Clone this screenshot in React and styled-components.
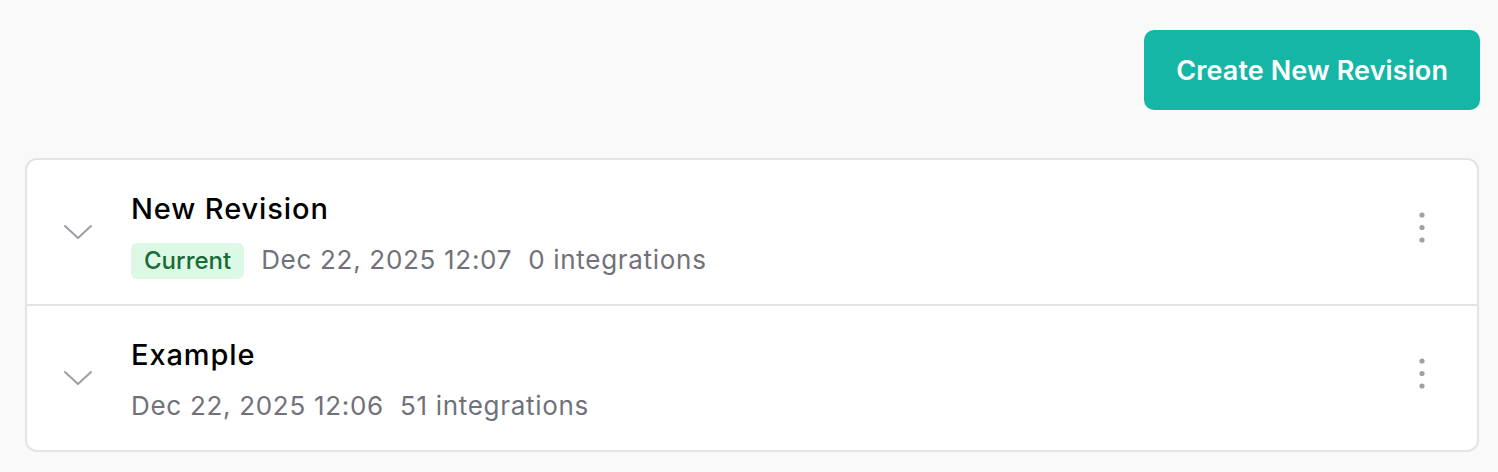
import React from 'react'
import styled, { createGlobalStyle } from 'styled-components'

const GlobalStyle = createGlobalStyle`
	html, body {
		margin: 0;
		padding: 0;
		background: #f9f9f9;
	}
	body {
		font-family: 'Inter', 'Liberation Sans', sans-serif;
		-webkit-font-smoothing: antialiased;
	}
`

const Page = styled.div`
	padding: 30px 19px 20px 25px;
	display: flex;
	flex-direction: column;
	gap: 48px;
`

const Toolbar = styled.div`
	display: flex;
	justify-content: flex-end;
	margin-right: -1px;
`

const PrimaryButton = styled.button`
	height: 80px;
	padding: 0 32px;
	background: #16b6a6;
	color: #fff;
	font-family: inherit;
	font-size: 27px;
	font-weight: 600;
	letter-spacing: 0.1px;
	border: none;
	border-radius: 10px;
	cursor: pointer;
`

const Card = styled.div`
	background: #fff;
	border: 2px solid #e4e4e6;
	border-radius: 12px;
	overflow: hidden;
`

const Row = styled.div`
	display: flex;
	align-items: center;
	padding: 30px 51px 27px 36px;
	border-top: ${(p) => (p.$first ? 'none' : '2px solid #e4e4e6')};
`

const Toggle = styled.button`
	display: flex;
	background: none;
	border: none;
	padding: 0;
	margin-right: 38px;
	margin-top: -4px;
	cursor: pointer;
`

const Body = styled.div`
	flex: 1;
	display: flex;
	flex-direction: column;
	gap: 15px;
`

const Title = styled.div`
	margin-top: 2px;
	font-size: 29px;
	line-height: 34px;
	font-weight: 500;
	letter-spacing: 0.9px;
	color: #000;
`

const Meta = styled.div`
	display: flex;
	align-items: center;
	gap: 17px;
	height: 36px;
	font-size: 26px;
	letter-spacing: 0.7px;
	color: #71717a;
	white-space: pre;
`

const Badge = styled.span`
	display: inline-flex;
	align-items: center;
	height: 36px;
	margin-top: 3px;
	padding: 0 13px;
	border-radius: 6px;
	background: #dcf9e6;
	color: #1a6b38;
	font-size: 24px;
	font-weight: 500;
	letter-spacing: 0;
`

const MenuButton = styled.button`
	display: flex;
	background: none;
	border: none;
	padding: 0;
	margin-bottom: 13px;
	cursor: pointer;
`

const Chevron = () => (
	<svg width='30' height='16' viewBox='0 0 30 16' fill='none'>
		<path
			d='M2 2 L15 14 L28 2'
			stroke='#9d9da6'
			strokeWidth='2'
			strokeLinecap='round'
			strokeLinejoin='round'
		/>
	</svg>
)

const Dots = () => (
	<svg width='8' height='33' viewBox='0 0 8 33' fill='#a0a0a8'>
		<circle cx='4' cy='4' r='2.6' />
		<circle cx='4' cy='16.5' r='2.6' />
		<circle cx='4' cy='29' r='2.6' />
	</svg>
)

const revisions = [
	{ name: 'New Revision', date: 'Dec 22, 2025 12:07', count: 0, current: true },
	{ name: 'Example', date: 'Dec 22, 2025 12:06', count: 51, current: false },
]

export default function App() {
	return (
		<Page>
			<GlobalStyle />
			<Toolbar>
				<PrimaryButton>Create New Revision</PrimaryButton>
			</Toolbar>
			<Card>
				{revisions.map((rev, i) => (
					<Row key={rev.name} $first={i === 0}>
						<Toggle aria-label='Expand'>
							<Chevron />
						</Toggle>
						<Body>
							<Title>{rev.name}</Title>
							<Meta>
								{rev.current && <Badge>Current</Badge>}
								<span>
									{rev.date}
									{'  '}
									{rev.count} integrations
								</span>
							</Meta>
						</Body>
						<MenuButton aria-label='More'>
							<Dots />
						</MenuButton>
					</Row>
				))}
			</Card>
		</Page>
	)
}
